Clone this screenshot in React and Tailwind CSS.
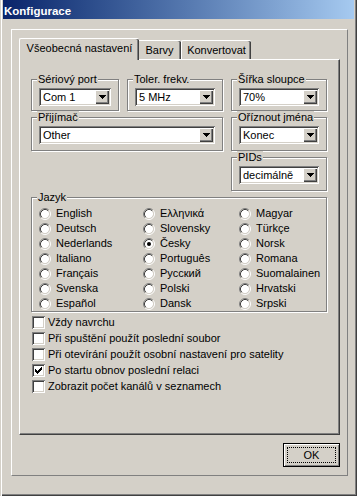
import React from "react";

const languages = [
  ["English", false], ["Deutsch", false], ["Nederlands", false], ["Italiano", false],
  ["Français", false], ["Svenska", false], ["Español", false],
  ["Ελληνικά", false], ["Slovensky", false], ["Česky", true], ["Português", false],
  ["Русский", false], ["Polski", false], ["Dansk", false],
  ["Magyar", false], ["Türkçe", false], ["Norsk", false], ["Romana", false],
  ["Suomalainen", false], ["Hrvatski", false], ["Srpski", false],
];

const options = [
  ["Vždy navrchu", false],
  ["Při spuštění použít poslední soubor", false],
  ["Při otevírání použít osobní nastavení pro satelity", false],
  ["Po startu obnov poslední relaci", true],
  ["Zobrazit počet kanálů v seznamech", false],
];

function Combo({ value }) {
  return (
    <div className="mx-[7px] mt-[3px] flex h-[18px] bg-white p-[2px] shadow-[inset_1px_1px_#808080,inset_-1px_-1px_#fff,inset_2px_2px_#404040,inset_-2px_-2px_#d4d0c8]">
      <span className="flex-1 pl-[2px] leading-[14px] whitespace-nowrap overflow-hidden">{value}</span>
      <span className="flex h-[14px] w-[14px] items-center justify-center bg-[#d4d0c8] shadow-[inset_1px_1px_#fff,inset_-1px_-1px_#404040,inset_-2px_-2px_#808080]">
        <svg width="7" height="4" viewBox="0 0 7 4">
          <path d="M0 0H7V1H6V2H5V3H4V4H3V3H2V2H1V1H0Z" fill="#000" />
        </svg>
      </span>
    </div>
  );
}

function Group({ title, className, children }) {
  return (
    <fieldset className={"min-w-0 border border-[#808080] shadow-[inset_1px_1px_#fff,1px_1px_#fff] " + className}>
      <legend className="ml-[5px] px-[1px] leading-[12px] bg-[#d4d0c8]">{title}</legend>
      {children}
    </fieldset>
  );
}

function Radio({ checked }) {
  return (
    <svg width="12" height="12" viewBox="0 0 12 12" className="shrink-0">
      <circle cx="6" cy="6" r="4.2" fill="#fff" />
      <path d="M2.11 9.89A5.5 5.5 0 0 1 9.89 2.11" fill="none" stroke="#808080" />
      <path d="M9.89 2.11A5.5 5.5 0 0 1 2.11 9.89" fill="none" stroke="#fff" />
      <path d="M2.82 9.18A4.5 4.5 0 0 1 9.18 2.82" fill="none" stroke="#404040" />
      <path d="M9.18 2.82A4.5 4.5 0 0 1 2.82 9.18" fill="none" stroke="#d4d0c8" />
      {checked && <circle cx="6" cy="6" r="2" fill="#000" />}
    </svg>
  );
}

function Check({ on }) {
  return (
    <span className="flex h-[13px] w-[13px] shrink-0 items-center justify-center bg-white shadow-[inset_1px_1px_#808080,inset_-1px_-1px_#fff,inset_2px_2px_#404040,inset_-2px_-2px_#d4d0c8]">
      {on && (
        <svg width="7" height="7" viewBox="0 0 7 7">
          <path
            d="M0 2h1v3h-1zM1 3h1v3h-1zM2 4h1v3h-1zM3 3h1v3h-1zM4 2h1v3h-1zM5 1h1v3h-1zM6 0h1v3h-1z"
            fill="#000"
          />
        </svg>
      )}
    </span>
  );
}

export default function App() {
  return (
    <div className="h-[496px] w-[357px] overflow-hidden bg-[#d4d0c8] px-[3px] text-[11px] leading-[13px] text-black font-['Liberation_Sans',Arial,sans-serif] shadow-[inset_1px_0_#d4d0c8,inset_2px_0_#fff,inset_-1px_-1px_#404040,inset_-2px_-2px_#808080]">
      {/* Title bar */}
      <div className="flex h-[19px] items-center pt-[4px] pl-[1px] bg-linear-to-r from-[#0a246a] to-[#a6caf0] text-[11.5px] font-bold text-white">
        Konfigurace
      </div>

      {/* Dialog frame */}
      <div className="ml-[8px] mt-[10px] h-[447px] w-[337px] border border-white border-r-[#808080] border-b-[#808080] pl-[7px] pt-[8px]">
        {/* Tabs */}
        <div className="flex h-[21px] items-end">
          <div className="relative z-10 -mb-[1px] -mr-[2px] h-[22px] w-[120px] rounded-t-[2px] border-l border-t border-white bg-[#d4d0c8] pt-[3px] text-center shadow-[inset_-1px_0_#404040,inset_-2px_0_#808080]">
            Všeobecná nastavení
          </div>
          <div className="h-[19px] w-[44px] rounded-t-[2px] border-l border-t border-white pt-[3px] text-center shadow-[inset_-1px_0_#404040,inset_-2px_0_#808080]">
            Barvy
          </div>
          <div className="h-[19px] w-[70px] rounded-t-[2px] border-l border-t border-white pt-[3px] text-center shadow-[inset_-1px_0_#404040,inset_-2px_0_#808080]">
            Konvertovat
          </div>
        </div>

        {/* Tab panel */}
        <div className="h-[376px] w-[321px] border border-white border-r-[#404040] border-b-[#404040] pl-[11px] pt-[13px] shadow-[inset_-1px_-1px_#808080]">
          <div className="grid grid-cols-[88px_96px_96px] grid-rows-[38px_40px_40px_121px] gap-x-[8px]">
            <Group title="Sériový port" className="">
              <Combo value="Com 1" />
            </Group>
            <Group title="Toler. frekv." className="">
              <Combo value="5 MHz" />
            </Group>
            <Group title="Šířka sloupce" className="">
              <Combo value="70%" />
            </Group>

            <Group title="Přijímač" className="col-span-2">
              <Combo value="Other" />
            </Group>
            <Group title="Oříznout jména" className="">
              <Combo value="Konec" />
            </Group>

            <Group title="PIDs" className="col-start-3">
              <Combo value="decimálně" />
            </Group>

            <Group title="Jazyk" className="col-span-3">
              <div className="grid grid-flow-col grid-cols-[104px_96px_1fr] grid-rows-[repeat(7,15px)] pl-[7px] pt-[3px]">
                {languages.map(([name, on]) => (
                  <div key={name} className="flex items-center gap-[5px]">
                    <Radio checked={on} />
                    <span>{name}</span>
                  </div>
                ))}
              </div>
            </Group>
          </div>

          <div className="mt-[2px] flex flex-col">
            {options.map(([label, on]) => (
              <div key={label} className="flex h-[16px] items-center gap-[3px] pl-[1px]">
                <Check on={on} />
                <span className="whitespace-nowrap">{label}</span>
              </div>
            ))}
          </div>
        </div>

        {/* Buttons */}
        <div className="mt-[8px] flex w-[321px] justify-end">
          <button className="flex h-[24px] w-[57px] border border-black bg-[#d4d0c8] p-[3px] shadow-[inset_1px_1px_#fff,inset_-1px_-1px_#808080]">
            <span className="flex flex-1 items-center justify-center border border-dotted border-black">OK</span>
          </button>
        </div>
      </div>
    </div>
  );
}
